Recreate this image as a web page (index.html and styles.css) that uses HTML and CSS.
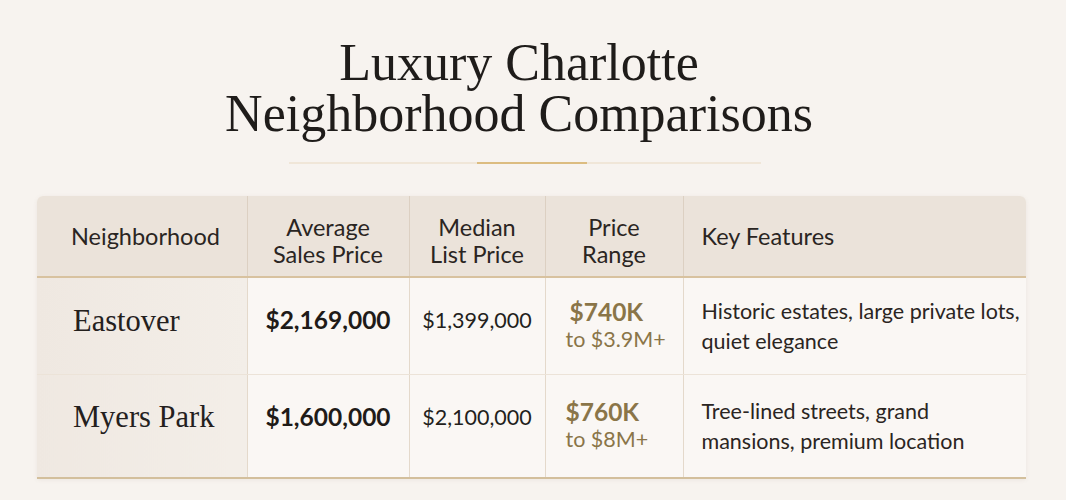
FILE: index.html
```html
<!DOCTYPE html>
<html lang="en">
<head>
<meta charset="utf-8">
<title>Luxury Charlotte Neighborhood Comparisons</title>
<link rel="stylesheet" href="styles.css">
</head>
<body>
<main class="page">
  <h1 class="title"><span class="title-line">Luxury Charlotte</span><span class="title-line">Neighborhood Comparisons</span></h1>
  <div class="divider"><span class="divider-accent"></span></div>
  <div class="card">
    <table class="compare">
      <colgroup>
        <col class="c1"><col class="c2"><col class="c3"><col class="c4"><col class="c5">
      </colgroup>
      <thead>
        <tr>
          <th class="h-left">Neighborhood</th>
          <th class="h-two">Average<br>Sales Price</th>
          <th class="h-two">Median<br>List Price</th>
          <th class="h-two">Price<br>Range</th>
          <th class="h-features">Key Features</th>
        </tr>
      </thead>
      <tbody>
        <tr class="row-1">
          <td class="name">Eastover</td>
          <td class="avg">$2,169,000</td>
          <td class="median">$1,399,000</td>
          <td class="range"><span class="range-low indent">$740K</span><span class="range-high">to $3.9M+</span></td>
          <td class="features">Historic estates, large private lots,<br>quiet elegance</td>
        </tr>
        <tr class="row-2">
          <td class="name">Myers Park</td>
          <td class="avg">$1,600,000</td>
          <td class="median">$2,100,000</td>
          <td class="range"><span class="range-low">$760K</span><span class="range-high">to $8M+</span></td>
          <td class="features">Tree-lined streets, grand<br>mansions, premium location</td>
        </tr>
      </tbody>
    </table>
  </div>
</main>
</body>
</html>
```

FILE: styles.css
```css
* { box-sizing: border-box; }
html, body { margin: 0; padding: 0; }
body {
  background: #f7f3ef;
  color: #231f1c;
  font-family: "Lato", "Liberation Sans", sans-serif;
  width: 1066px;
  height: 500px;
  overflow: hidden;
}
.page {
  display: flex;
  flex-direction: column;
  align-items: center;
  padding-top: 37px;
}
.title {
  margin: 0 28px 0 0;
  font-family: "Liberation Serif", "Times New Roman", serif;
  font-weight: 400;
  font-size: 52px;
  text-align: center;
  color: #1f1c1a;
  display: flex;
  flex-direction: column;
  align-items: center;
}
.title-line {
  display: block;
  line-height: 51px;
  height: 51px;
}
.divider {
  margin-top: 23px;
  margin-right: 16px;
  width: 472px;
  height: 2px;
  background: #f0e6d8;
  display: flex;
  justify-content: center;
  align-items: center;
}
.divider-accent {
  display: block;
  width: 110px;
  height: 2px;
  margin-left: 14px;
  background: #dcbc80;
}
.card {
  margin-top: 32px;
  width: 989px;
  margin-right: 3px;
  border-radius: 6px 6px 0 0;
  box-shadow: 0 1px 4px rgba(120, 95, 60, 0.08);
  background: #faf7f4;
  overflow: hidden;
}
.compare {
  width: 100%;
  border-collapse: collapse;
  table-layout: fixed;
}
.c1 { width: 210px; }
.c2 { width: 162px; }
.c3 { width: 136px; }
.c4 { width: 138px; }
.c5 { width: 343px; }
.compare thead th {
  background: #ebe3da;
  height: 81px;
  font-weight: 400;
  font-size: 23.5px;
  line-height: 27px;
  color: #2a2522;
  text-align: center;
  vertical-align: middle;
  border-bottom: 2px solid #d8c29f;
  border-left: 1px solid #dcd0c2;
  padding: 0 4px;
}
.compare thead th:first-child { border-left: none; }
.compare thead th.h-two { padding-top: 10px; }
.compare thead th.h-left { text-align: left; padding-left: 34px; }
.compare thead th.h-features { text-align: left; padding-left: 18px; }
.compare tbody td {
  border-left: 1px solid #e4d9cb;
  text-align: center;
  vertical-align: middle;
  background: #faf7f4;
  padding: 0 4px;
}
.compare tbody td:first-child { border-left: none; }
.row-1 td { height: 97px; border-bottom: 1px solid #ece3d8; }
.row-2 td { height: 104px; border-bottom: 2px solid #d3bf9c; padding-bottom: 8px; }
.compare tbody td.name {
  background: linear-gradient(90deg, #efe8e1 0%, #f3eee8 100%);
  text-align: left;
  padding-left: 36px;
  font-family: "Liberation Serif", "Times New Roman", serif;
  font-size: 30.5px;
  color: #24201d;
}
.row-1 td.name { padding-bottom: 8px; }
.row-2 td.name { padding-bottom: 16px; }
.avg {
  font-weight: 700;
  font-size: 24.5px;
  color: #1f1b18;
}
.median {
  font-size: 21.5px;
  color: #231f1c;
}
.row-1 .avg, .row-1 .median { padding-bottom: 12px; }
.row-2 .avg, .row-2 .median { padding-bottom: 18px; }
.compare tbody td.range {
  color: #8a7548;
  text-align: left;
  padding-left: 20px;
}
.range-low {
  display: block;
  font-weight: 700;
  font-size: 24.5px;
  line-height: 28px;
}
.range-low.indent { padding-left: 4px; }
.range-high {
  display: block;
  font-size: 21.5px;
  line-height: 27px;
}
.compare tbody td.features {
  text-align: left;
  padding-left: 18px;
  padding-right: 2px;
  font-size: 21.5px;
  line-height: 30px;
  color: #2a2522;
  white-space: nowrap;
}
```
